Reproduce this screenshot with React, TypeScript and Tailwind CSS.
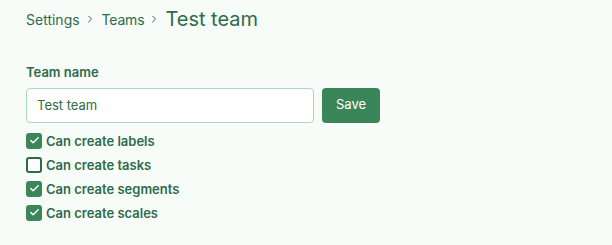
import { Check, ChevronRight } from 'lucide-react';

const PERMS = [
  { label: 'Can create labels', on: true },
  { label: 'Can create tasks', on: false },
  { label: 'Can create segments', on: true },
  { label: 'Can create scales', on: true },
];

export default function App() {
  return (
    <div className="min-h-[245px] w-[612px] bg-[#f7fcf9] px-[26px] pt-[5px] text-[#2f6b4a]" style={{ fontFamily: 'Inter, "Noto Sans", sans-serif' }}>
      <nav className="flex items-center gap-[4px] h-[28px]">
        <span className="text-[14px]">Settings</span>
        <ChevronRight size={12} strokeWidth={2} />
        <span className="ml-[2px] text-[14px] tracking-[-0.2px]">Teams</span>
        <ChevronRight size={12} strokeWidth={2} />
        <span className="ml-[1px] text-[20px]">Test team</span>
      </nav>

      <div className="mt-[30px]">
        <label className="block text-[13px] font-semibold">Team name</label>
        <div className="mt-[5px] flex gap-[8px]">
          <input
            defaultValue="Test team"
            className="h-[35px] w-[288px] rounded-[4px] border border-[#a9d8bd] bg-white px-[10px] text-[13px] text-[#2f6b4a] outline-none"
          />
          <button className="h-[35px] w-[58px] rounded-[4px] bg-[#3b8659] text-[13px] text-white">Save</button>
        </div>
      </div>

      <div className="mt-[8px] flex flex-col gap-[4px]">
        {PERMS.map((p) => (
          <label key={p.label} className="flex items-center gap-[4px] text-[13px] leading-[20px] font-semibold">
            <span
              className={`flex h-[16px] w-[16px] items-center justify-center rounded-[3px] ${p.on ? 'bg-[#3b8659]' : 'border-2 border-[#2f6b4a] bg-white'}`}
            >
              {p.on && <Check size={11} strokeWidth={3} className="text-white" />}
            </span>
            {p.label}
          </label>
        ))}
      </div>
    </div>
  );
}
